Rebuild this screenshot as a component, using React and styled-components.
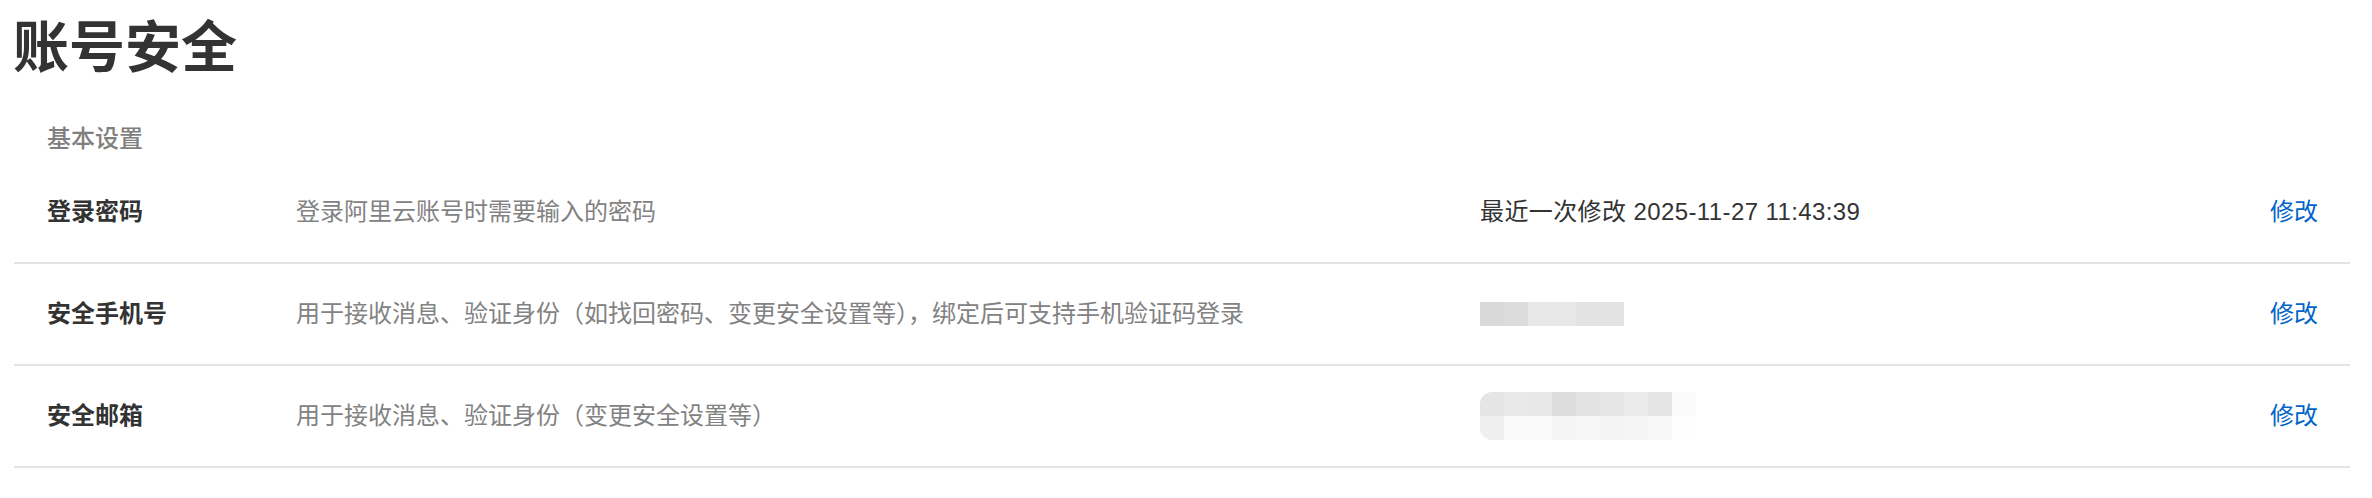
import React from 'react';
import styled, { createGlobalStyle } from 'styled-components';

const GlobalStyle = createGlobalStyle`
    body {
        margin: 0;
        background: #fff;
        font-family: "Liberation Sans", "Noto Sans CJK SC", sans-serif;
    }
`;

// 打码块 (颜色取自截图)
const PHONE_MASK = [
    ['#d9d9d9', '#dbdbdb', '#e8e8e8', '#e8e8e8', '#e3e3e3', '#e3e3e3'],
];

const EMAIL_MASK = [
    ['#e5e5e5', '#e9e9e9', '#e8e8e8', '#dcdddc', '#e3e3e3', '#e6e6e6', '#ebebeb', '#e4e4e4', '#fbfbfb'],
    ['#efefef', '#fafafa', '#f9f9f9', '#f5f5f5', '#f7f7f7', '#f3f3f3', '#f5f5f5', '#f8f8f8', '#fefefe'],
];

const ROWS = [
    {
        id: 'password',
        label: '登录密码',
        desc: '登录阿里云账号时需要输入的密码',
        value: '最近一次修改 2025-11-27 11:43:39',
    },
    {
        id: 'phone',
        label: '安全手机号',
        desc: '用于接收消息、验证身份（如找回密码、变更安全设置等），绑定后可支持手机验证码登录',
        mask: PHONE_MASK,
    },
    {
        id: 'email',
        label: '安全邮箱',
        desc: '用于接收消息、验证身份（变更安全设置等）',
        mask: EMAIL_MASK,
        rounded: true,
    },
];

const Mask = ({ cells, rounded }) => (
    <MaskGrid $cols={cells[0].length} $rounded={rounded}>
        {cells.flat().map((c, i) => (
            <MaskCell key={i} $shade={c} />
        ))}
    </MaskGrid>
);

const App = () => {
    return (
        <Page>
            <GlobalStyle />
            <Title>账号安全</Title>
            <SectionLabel>基本设置</SectionLabel>
            <List>
                {ROWS.map((row) => (
                    <Row key={row.id}>
                        <Label>{row.label}</Label>
                        <Desc>{row.desc}</Desc>
                        <Value>
                            {row.value ? row.value : <Mask cells={row.mask} rounded={row.rounded} />}
                        </Value>
                        <Action href="#">修改</Action>
                    </Row>
                ))}
            </List>
        </Page>
    );
};

const Page = styled.div`
    width: 2336px;
    padding: 20px 0 0 14px;
    color: #333;
`;

const Title = styled.h1`
    margin: 0 0 0 -1px;
    font-size: 56px;
    line-height: 56px;
    font-weight: 700;
    color: #333;
`;

const SectionLabel = styled.div`
    margin-top: 51px;
    padding-left: 33px;
    font-size: 24px;
    line-height: 24px;
    font-weight: 500;
    color: #7f7f7f;
`;

const List = styled.div`
    margin-top: 11px;
`;

const Row = styled.div`
    display: grid;
    grid-template-columns: 249px 1184px 1fr auto;
    align-items: center;
    height: 100px;
    padding: 0 32px 0 33px;
    border-bottom: 2px solid #e4e4e4;
    font-size: 24px;
    line-height: 24px;
`;

const Label = styled.div`
    font-weight: 700;
    color: #333;
`;

const Desc = styled.div`
    color: #828282;
`;

const Value = styled.div`
    display: flex;
    align-items: center;
    color: #333;
    letter-spacing: 0.4px;
`;

const Action = styled.a`
    color: #0064c8;
    text-decoration: none;
`;

const MaskGrid = styled.div`
    display: grid;
    grid-template-columns: repeat(${(p) => p.$cols}, 24px);
    grid-auto-rows: 24px;
    border-radius: ${(p) => (p.$rounded ? '12px 0 0 12px' : '0')};
    overflow: hidden;
`;

const MaskCell = styled.div`
    background: ${(p) => p.$shade};
`;

export default App;
